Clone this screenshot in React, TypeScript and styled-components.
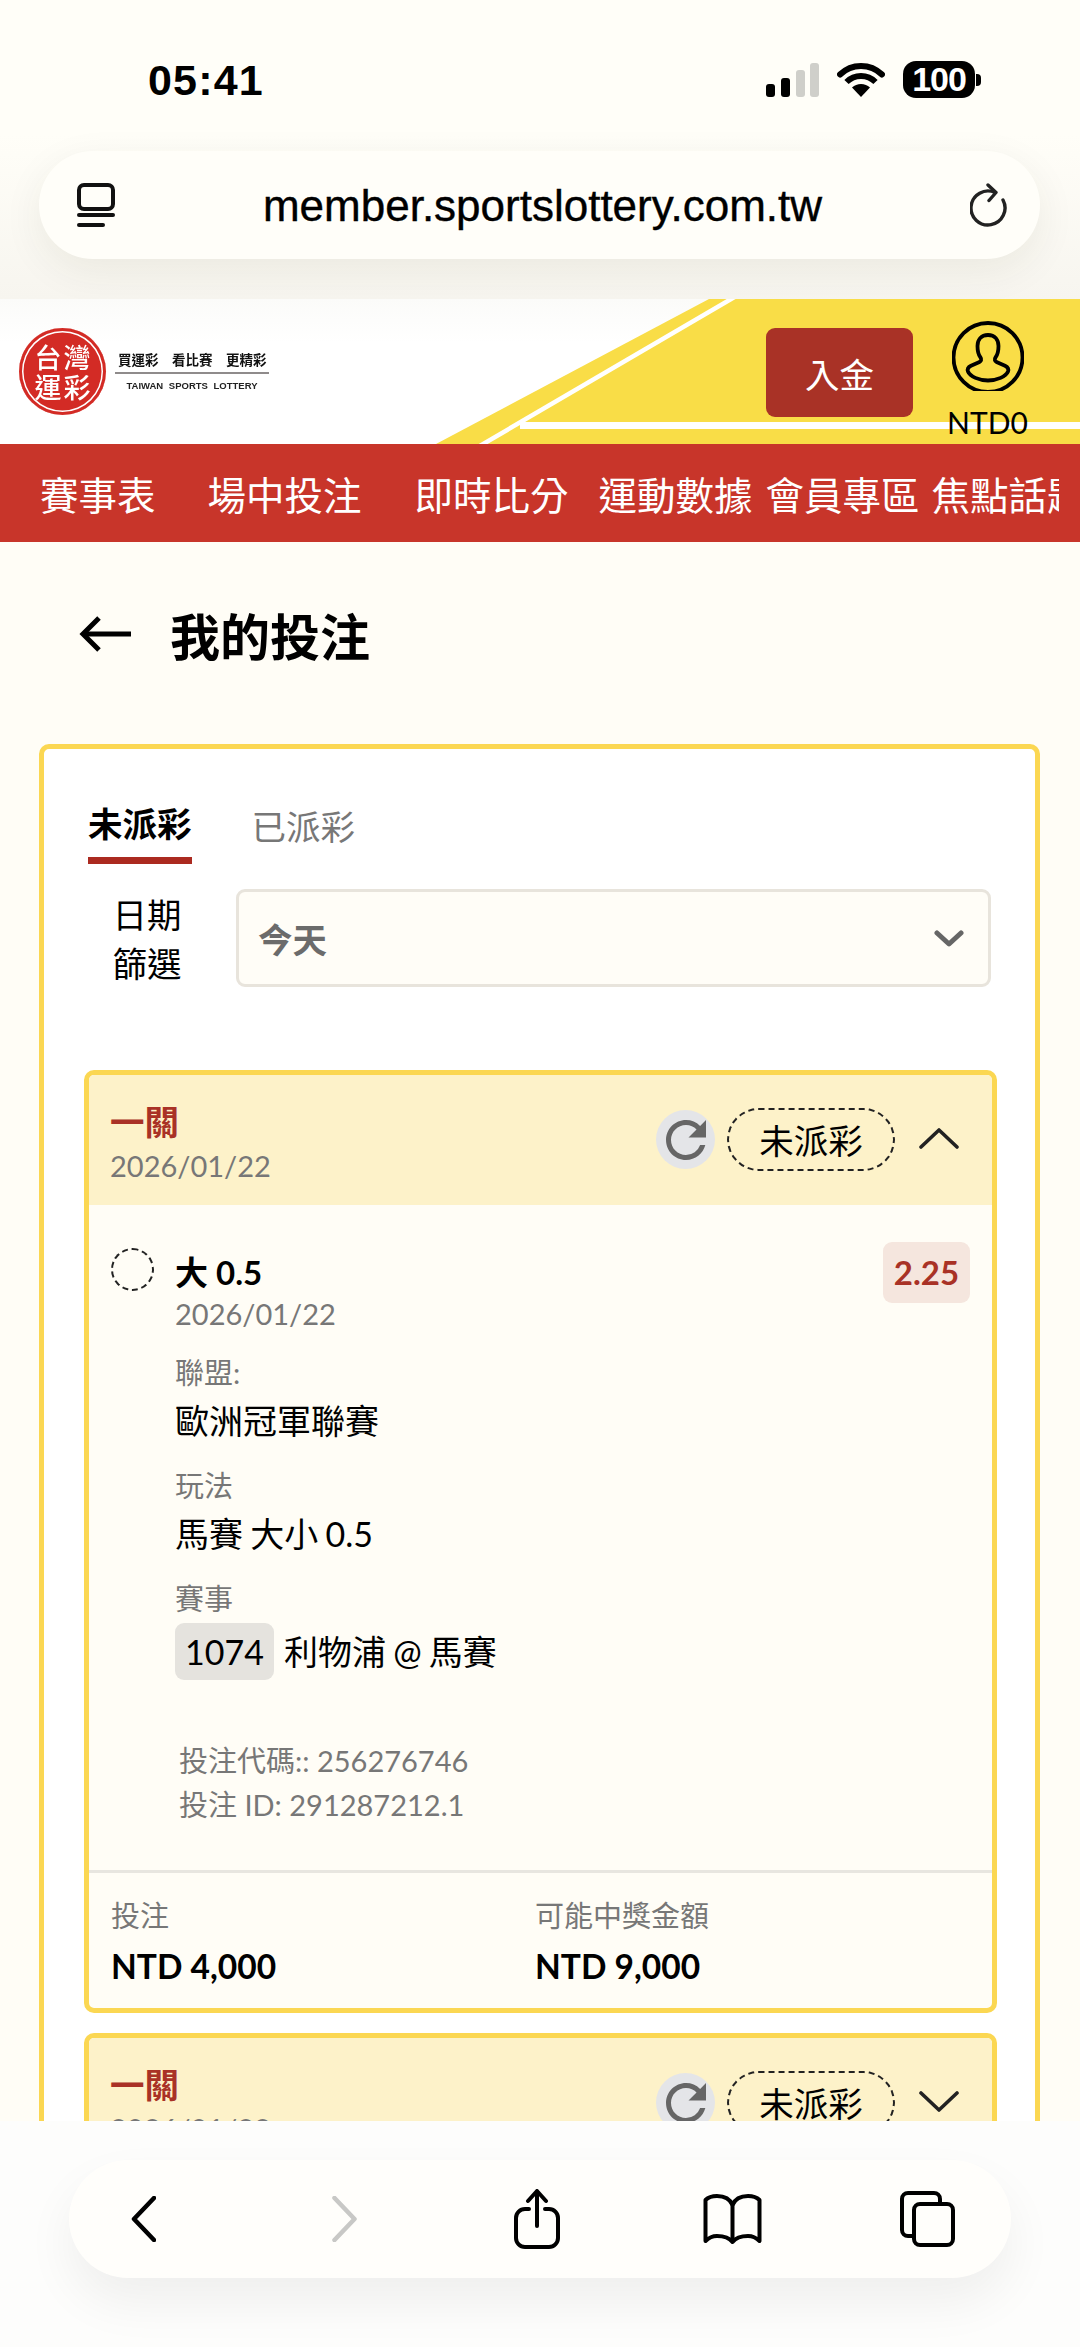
import React from "react";
import styled, { createGlobalStyle } from "styled-components";
import { MdRefresh } from "react-icons/md";

const GlobalStyle = createGlobalStyle`
  html, body {
    margin: 0;
    padding: 0;
    background: #fffdf6;
  }
  * {
    box-sizing: border-box;
  }
`;

const NAV_ITEMS = [
  { label: "賽事表", gap: 52 },
  { label: "場中投注", gap: 53 },
  { label: "即時比分", gap: 30 },
  { label: "運動數據", gap: 13 },
  { label: "會員專區", gap: 12 },
  { label: "焦點話題", gap: 0 },
];

const Chevron = ({ up }: { up?: boolean }) => (
  <ChevronSvg viewBox="0 0 40 22" fill="none" stroke="#222" strokeWidth="3.6" strokeLinecap="round" strokeLinejoin="round">
    <path d={up ? "M2 20 20 3l18 17" : "M2 3l18 17L38 3"} />
  </ChevronSvg>
);

const BetHeader = ({ up }: { up?: boolean }) => (
  <Header>
    <div>
      <BetKind>一關</BetKind>
      <BetDate>2026/01/22</BetDate>
    </div>
    <HeaderActions>
      <RefreshButton>
        <MdRefresh size={60} color="#666" />
      </RefreshButton>
      <StatusPill>未派彩</StatusPill>
      <Chevron up={up} />
    </HeaderActions>
  </Header>
);

export default function App() {
  return (
    <Page>
      <GlobalStyle />
      <BrowserTop>
        <StatusBar>
          <Clock>05:41</Clock>
          <StatusIcons>
            <svg width="54" height="34" viewBox="0 0 54 34">
              <rect x="0" y="21" width="9" height="13" rx="3" fill="#000" />
              <rect x="15" y="15" width="9" height="19" rx="3" fill="#000" />
              <rect x="30" y="7" width="9" height="27" rx="3" fill="#cfcfca" />
              <rect x="44" y="0" width="9" height="34" rx="3" fill="#cfcfca" />
            </svg>
            <svg width="48" height="35" viewBox="0 0 48 35">
              <path d="M24 35 15 25.500a13 13 0 0 1 18 0z" fill="#000" />
              <path d="M9.500 20a20.500 20.500 0 0 1 29 0" fill="none" stroke="#000" strokeWidth="6" />
              <path d="M3 12.500a30 30 0 0 1 42 0" fill="none" stroke="#000" strokeWidth="6" strokeLinecap="round" />
            </svg>
            <Battery>
              <BatteryBody>100</BatteryBody>
              <BatteryNub />
            </Battery>
          </StatusIcons>
        </StatusBar>
        <AddressBar>
          <svg width="38" height="44" viewBox="0 0 38 44" fill="none" stroke="#111" strokeWidth="4" strokeLinecap="round">
            <rect x="2" y="2" width="34" height="24" rx="5" />
            <path d="M2 32h34" />
            <path d="M2 42h24" />
          </svg>
          <AddressText>member.sportslottery.com.tw</AddressText>
          <svg width="38" height="44" viewBox="0 0 38 44" fill="none" stroke="#222" strokeWidth="3.400" strokeLinecap="round" strokeLinejoin="round">
            <path d="M25 9.500A17 17 0 1 0 33 17" />
            <path d="M18 2l8 7.500-7 8" />
          </svg>
        </AddressBar>
      </BrowserTop>

      <SiteHeader>
        <HeaderArt viewBox="0 0 1080 145" preserveAspectRatio="none">
          <polygon points="436,145 709,0 1080,0 1080,145" fill="#f9dd47" />
          <path d="M478 148 738 -4" stroke="#fff" strokeWidth="4.500" fill="none" />
          <rect x="520" y="123" width="560" height="7" fill="#fff" />
        </HeaderArt>
        <Logo>
          <LogoMark>
            <LogoChar>台</LogoChar>
            <LogoChar>灣</LogoChar>
            <LogoChar>運</LogoChar>
            <LogoChar>彩</LogoChar>
          </LogoMark>
          <LogoCopy>
            <LogoSlogan>買運彩　看比賽　更精彩</LogoSlogan>
            <LogoEnglish>TAIWAN SPORTS LOTTERY</LogoEnglish>
          </LogoCopy>
        </Logo>
        <DepositButton>入金</DepositButton>
        <Account>
          <svg width="72" height="70" viewBox="0 0 72 70" fill="none" stroke="#000" strokeWidth="3.800" strokeLinejoin="round">
            <circle cx="36" cy="36.500" r="34.500" />
            <path d="M36 14c-7 0-10.500 5-10.500 11 0 5 1 9 3 11.500 1.500 2 .5 3.500-1 4.500l-8.500 3.800c-3 1.500-4 3-3 5.700 2 5 11 9 20 9s18-4 20-9c1-2.700 0-4.200-3-5.700l-8.500-3.800c-1.500-1-2.500-2.500-1-4.500 2-2.500 3-6.500 3-11.500 0-6-3.500-11-10.500-11z" />
          </svg>
          <Balance>NTD0</Balance>
        </Account>
      </SiteHeader>

      <NavBar>
        <NavTrack>
          {NAV_ITEMS.map((item) => (
            <NavItem key={item.label} $gap={item.gap}>{item.label}</NavItem>
          ))}
        </NavTrack>
      </NavBar>

      <TitleRow>
        <svg width="52" height="36" viewBox="0 0 52 36" fill="none" stroke="#000" strokeWidth="5">
          <path d="M52 18H5" />
          <path d="M20 2 4 18l16 16" />
        </svg>
        <PageTitle>我的投注</PageTitle>
      </TitleRow>

      <Panel>
        <Tabs>
          <Tab $active>未派彩</Tab>
          <Tab>已派彩</Tab>
        </Tabs>
        <FilterRow>
          <FilterLabel>日期<br />篩選</FilterLabel>
          <Select>
            今天
            <svg width="30" height="17" viewBox="0 0 30 17" fill="none" stroke="#666" strokeWidth="5" strokeLinecap="round" strokeLinejoin="round">
              <path d="M3 3l12 11L27 3" />
            </svg>
          </Select>
        </FilterRow>

        <BetCard>
          <BetHeader up />
          <BetBody>
            <SelectionRow>
              <DashedDot />
              <SelectionInfo>
                <SelectionName>大 0.5</SelectionName>
                <SelectionDate>2026/01/22</SelectionDate>
                <Group>
                  <GroupLabel>聯盟:</GroupLabel>
                  <GroupValue>歐洲冠軍聯賽</GroupValue>
                </Group>
                <Group>
                  <GroupLabel>玩法</GroupLabel>
                  <GroupValue>馬賽 大小 0.5</GroupValue>
                </Group>
                <Group>
                  <GroupLabel>賽事</GroupLabel>
                  <MatchRow>
                    <MatchCode>1074</MatchCode>
                    <GroupValue>利物浦 @ 馬賽</GroupValue>
                  </MatchRow>
                </Group>
              </SelectionInfo>
              <Odds>2.25</Odds>
            </SelectionRow>
            <BetIds>
              <div>投注代碼:: 256276746</div>
              <div>投注 ID: 291287212.1</div>
            </BetIds>
          </BetBody>
          <BetFooter>
            <FooterCol>
              <FooterLabel>投注</FooterLabel>
              <FooterAmount>NTD 4,000</FooterAmount>
            </FooterCol>
            <FooterCol>
              <FooterLabel>可能中獎金額</FooterLabel>
              <FooterAmount>NTD 9,000</FooterAmount>
            </FooterCol>
          </BetFooter>
        </BetCard>

        <BetCard>
          <BetHeader />
        </BetCard>
      </Panel>

      <BrowserBottom>
        <Toolbar>
          <svg width="25" height="46" viewBox="0 0 25 46" fill="none" stroke="#000" strokeWidth="4.500" strokeLinecap="round" strokeLinejoin="round">
            <path d="M23 2 3 23l20 21" />
          </svg>
          <ToolSlot $gap={176}>
            <svg width="26" height="46" viewBox="0 0 25 46" fill="none" stroke="#c8c8c6" strokeWidth="4.500" strokeLinecap="round" strokeLinejoin="round">
              <path d="M2 2l20 21L2 44" />
            </svg>
          </ToolSlot>
          <ToolSlot $gap={156}>
            <svg width="46" height="60" viewBox="0 0 46 60" fill="none" stroke="#000" strokeWidth="4" strokeLinecap="round" strokeLinejoin="round">
              <path d="M15 20h-4a9 9 0 0 0-9 9v20a9 9 0 0 0 9 9h24a9 9 0 0 0 9-9V29a9 9 0 0 0-9-9h-4" />
              <path d="M23 37V3" />
              <path d="M14 12l9-10 9 10" />
            </svg>
          </ToolSlot>
          <ToolSlot $gap={143}>
            <svg width="59" height="50" viewBox="0 0 59 50" fill="none" stroke="#000" strokeWidth="4" strokeLinejoin="round">
              <path d="M29.500 11C27 5 21 2 14 2 9 2 5 3.500 2.500 6v41C6 43.500 10 42 14 42c7 0 12.500 2 15.500 6 3-4 8.500-6 15.500-6 4 0 8 1.500 11.500 5V6C54 3.500 50 2 45 2c-7 0-13 3-15.500 9z" />
              <path d="M29.500 11v37" />
            </svg>
          </ToolSlot>
          <ToolSlot $gap={137}>
            <svg width="57" height="56" viewBox="0 0 57 56" fill="none" stroke="#000" strokeWidth="4" strokeLinejoin="round">
              <path d="M14 45H9a6 6 0 0 1-6-6V8a6 6 0 0 1 6-6h26a6 6 0 0 1 6 6v5" />
              <rect x="15" y="13" width="39" height="41" rx="6" />
            </svg>
          </ToolSlot>
        </Toolbar>
      </BrowserBottom>
    </Page>
  );
}

const SANS = `"Lato", "Noto Sans CJK TC", sans-serif`;
const CJK = `"Noto Sans CJK TC", sans-serif`;
const SYSTEM = `"Liberation Sans", sans-serif`;

const Page = styled.div`
  position: relative;
  width: 1080px;
  height: 2347px;
  overflow: hidden;
  background: #fffdf6;
  color: #000;
  font-family: ${SANS};
`;

const BrowserTop = styled.div`
  height: 299px;
  background: linear-gradient(#fffef8 0%, #fffef8 45%, #f7f5ef 100%);
`;

const StatusBar = styled.div`
  height: 151px;
  padding: 56px 99px 0 148px;
  display: flex;
  justify-content: space-between;
  align-items: flex-start;
`;

const Clock = styled.div`
  font: 700 43px/48px ${SYSTEM};
  letter-spacing: 1.2px;
`;

const StatusIcons = styled.div`
  display: flex;
  align-items: center;
  gap: 17px;
  margin-top: 5px;
`;

const Battery = styled.div`
  display: flex;
  align-items: center;
  margin-left: 1px;
`;

const BatteryBody = styled.div`
  width: 72px;
  height: 37px;
  border-radius: 13px;
  background: #000;
  color: #fff;
  font: 700 34px/37px ${SYSTEM};
  letter-spacing: -1px;
  text-align: center;
`;

const BatteryNub = styled.div`
  width: 5px;
  height: 12px;
  margin-left: 1px;
  background: #000;
  border-radius: 0 4px 4px 0;
`;

const AddressBar = styled.div`
  margin: 0 40px 0 39px;
  height: 108px;
  padding: 0 32px 0 38px;
  border-radius: 54px;
  background: #fffef9;
  box-shadow: 0 12px 40px rgba(60, 50, 20, 0.07);
  display: flex;
  align-items: center;
  justify-content: space-between;
`;

const AddressText = styled.div`
  margin-top: 2px;
  font: 400 44px/48px ${SYSTEM};
  -webkit-text-stroke: 0.4px #000;
`;

const SiteHeader = styled.header`
  position: relative;
  height: 145px;
  padding: 29px 54px 0 19px;
  background: linear-gradient(#fbfbf9, #fff 30%);
  display: flex;
  align-items: flex-start;
`;

const HeaderArt = styled.svg`
  position: absolute;
  inset: 0;
  width: 100%;
  height: 100%;
`;

const Logo = styled.div`
  position: relative;
  display: flex;
  align-items: center;
  gap: 9px;
  margin-right: auto;
  filter: blur(0.4px);
`;

const LogoMark = styled.div`
  width: 87px;
  height: 87px;
  border-radius: 50%;
  background: #d32b25;
  box-shadow: inset 0 0 0 3px #d32b25, inset 0 0 0 4.500px #fff;
  display: grid;
  grid-template-columns: 29px 29px;
  grid-auto-rows: 30px;
  justify-content: center;
  align-content: center;
`;

const LogoChar = styled.span`
  color: #fff;
  font: 500 27px/30px ${CJK};
  text-align: center;
`;

const LogoCopy = styled.div`
  width: 154px;
`;

const LogoSlogan = styled.div`
  padding: 0 3px 5px;
  border-bottom: 2px solid #8f8b8b;
  color: #111;
  font: 700 13.500px/16px ${CJK};
  white-space: nowrap;
`;

const LogoEnglish = styled.div`
  margin-top: 6px;
  color: #222;
  font: 700 9.500px/12px ${SYSTEM};
  word-spacing: 3px;
  text-align: center;
  white-space: nowrap;
`;

const DepositButton = styled.button`
  position: relative;
  width: 147px;
  height: 89px;
  border: 0;
  border-radius: 9px;
  background: #a93226;
  color: #fff;
  font: 400 34.500px/40px ${CJK};
`;

const Account = styled.div`
  position: relative;
  width: 77px;
  margin: -7px 0 0 36px;
  display: flex;
  flex-direction: column;
  align-items: center;
`;

const Balance = styled.div`
  margin-top: 13px;
  font: 400 30px/36px ${SANS};
  white-space: nowrap;
`;

const NavBar = styled.nav`
  height: 98px;
  background: #c8352a;
  padding-right: 21px;
`;

const NavTrack = styled.div`
  height: 100%;
  padding-left: 40px;
  overflow: hidden;
  display: flex;
  align-items: center;
`;

const NavItem = styled.div<{ $gap: number }>`
  flex: none;
  margin-right: ${(p) => p.$gap}px;
  color: #fff;
  font: 400 38.500px/48px ${CJK};
  white-space: nowrap;
`;

const TitleRow = styled.div`
  height: 202px;
  padding: 60px 0 0 79px;
  display: flex;
  align-items: flex-start;
  gap: 39px;

  svg {
    margin-top: 14px;
  }
`;

const PageTitle = styled.h1`
  margin: 0;
  font: 700 50px/64px ${CJK};
`;

const Panel = styled.section`
  margin: 0 40px 0 39px;
  padding: 0 38px 0 40px;
  border: 5px solid #fbd752;
  border-radius: 10px;
  background: #fff;
`;

const Tabs = styled.div`
  display: flex;
  gap: 60px;
  margin-left: 4px;
`;

const Tab = styled.div<{ $active?: boolean }>`
  height: 115px;
  padding-top: ${(p) => (p.$active ? 51 : 54)}px;
  color: ${(p) => (p.$active ? "#000" : "#777")};
  font: ${(p) => (p.$active ? 700 : 400)} 34.500px/44px ${CJK};
  position: relative;

  &::after {
    content: "";
    display: ${(p) => (p.$active ? "block" : "none")};
    position: absolute;
    left: 0;
    right: 0;
    bottom: 0;
    height: 7px;
    background: #ab2a20;
  }
`;

const FilterRow = styled.div`
  display: flex;
  gap: 30px;
  margin: 25px 6px 83px 4px;
`;

const FilterLabel = styled.div`
  width: 118px;
  font: 400 34.500px/49px ${CJK};
  text-align: center;
`;

const Select = styled.div`
  flex: 1;
  height: 98px;
  padding: 0 24px 0 19px;
  border: 3px solid #e8e4dc;
  border-radius: 9px;
  background: #fffdf7;
  color: #6b6b6b;
  font: 700 34.500px/44px ${CJK};
  display: flex;
  align-items: center;
  justify-content: space-between;
`;

const BetCard = styled.article`
  margin-bottom: 20px;
  border: 5px solid #fbd752;
  border-radius: 10px;
  background: #fffdf6;
  overflow: hidden;
`;

const Header = styled.div`
  height: 130px;
  padding: 25px 33px 0 21px;
  background: #fdf2c9;
  display: flex;
  justify-content: space-between;
  align-items: flex-start;
`;

const BetKind = styled.div`
  color: #a93226;
  font: 700 34.500px/44px ${SANS};
`;

const BetDate = styled.div`
  color: #777;
  font: 400 29px/44px ${SANS};
`;

const HeaderActions = styled.div`
  display: flex;
  align-items: center;
  margin-top: 8px;
`;

const RefreshButton = styled.div`
  width: 59px;
  height: 59px;
  border-radius: 50%;
  background: #e4e5e8;
  display: flex;
  align-items: center;
  justify-content: center;
  margin-right: 12px;

  svg {
    flex: none;
  }
`;

const StatusPill = styled.div`
  width: 168px;
  height: 63px;
  border: 2.500px dashed #222;
  border-radius: 32px;
  font: 400 34.500px/58px ${CJK};
  text-align: center;
  margin-right: 24px;
`;

const ChevronSvg = styled.svg`
  width: 40px;
  height: 22px;
  margin-top: -4px;
`;

const BetBody = styled.div`
  padding: 37px 22px 0;
`;

const SelectionRow = styled.div`
  display: flex;
  align-items: flex-start;
`;

const DashedDot = styled.div`
  flex: none;
  width: 43px;
  height: 43px;
  margin: 6px 21px 0 0;
  border: 2px dashed #222;
  border-radius: 50%;
`;

const SelectionInfo = styled.div`
  flex: 1;
  padding-top: 8px;
`;

const SelectionName = styled.div`
  font: 700 33px/44px ${SANS};
`;

const SelectionDate = styled.div`
  color: #777;
  font: 400 29px/40px ${SANS};
`;

const Group = styled.div`
  margin-top: 19px;

  & + & {
    margin-top: 22px;
  }
`;

const GroupLabel = styled.div`
  color: #777;
  font: 400 29px/40px ${SANS};
`;

const GroupValue = styled.div`
  margin-top: 5px;
  font: 400 34px/46px ${SANS};
  word-spacing: -1.500px;
`;

const MatchRow = styled.div`
  display: flex;
  align-items: center;
  gap: 10px;
  margin-top: 4px;

  ${GroupValue} {
    margin-top: 0;
  }
`;

const MatchCode = styled.span`
  width: 99px;
  height: 57px;
  border-radius: 9px;
  background: #e5e3de;
  font: 400 34px/57px ${SANS};
  text-align: center;
`;

const Odds = styled.div`
  flex: none;
  width: 87px;
  height: 61px;
  border-radius: 9px;
  background: #f5e6de;
  color: #a93226;
  font: 700 33px/61px ${SANS};
  text-align: center;
`;

const BetIds = styled.div`
  margin: 59px 0 43px 68px;
  color: #777;
  font: 400 29px/44px ${SANS};
`;

const BetFooter = styled.div`
  border-top: 3px solid #e8e6e0;
  padding: 23px 22px 19px;
  display: grid;
  grid-template-columns: 424px 1fr;
`;

const FooterCol = styled.div``;

const FooterLabel = styled.div`
  color: #777;
  font: 400 29px/40px ${SANS};
`;

const FooterAmount = styled.div`
  margin-top: 7px;
  font: 700 33.500px/46px ${SANS};
`;

const BrowserBottom = styled.div`
  position: absolute;
  left: 0;
  right: 0;
  bottom: 0;
  height: 226px;
  padding: 39px 69px 0;
  background: #fdfdfc;
`;

const Toolbar = styled.div`
  height: 118px;
  padding-left: 62px;
  border-radius: 59px;
  background: #fffefb;
  box-shadow: 0 24px 50px rgba(0, 0, 0, 0.06);
  display: flex;
  align-items: center;
`;

const ToolSlot = styled.div<{ $gap: number }>`
  margin-left: ${(p) => p.$gap}px;
  display: flex;
`;
